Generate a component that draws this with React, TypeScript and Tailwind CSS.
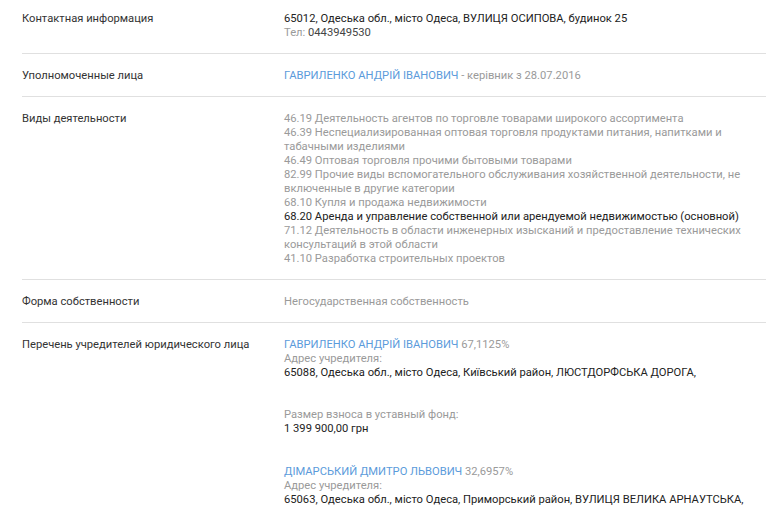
import React from 'react'

const gray = 'text-[#9a9a9a]'
const link = 'text-[#5b9bdb]'

function Row({ label, children, first }: { label: string; children: React.ReactNode; first?: boolean }) {
  return (
    <div className={`flex border-b border-[#e0e0e0] ${first ? 'pt-[12px]' : 'pt-[15px]'} pb-[13px]`}>
      <div className="w-[262px] shrink-0 text-[#333]">{label}</div>
      <div className="w-[482px]">{children}</div>
    </div>
  )
}

const activities: [string, boolean][] = [
  ['46.19 Деятельность агентов по торговле товарами широкого ассортимента', false],
  ['46.39 Неспециализированная оптовая торговля продуктами питания, напитками и табачными изделиями', false],
  ['46.49 Оптовая торговля прочими бытовыми товарами', false],
  ['82.99 Прочие виды вспомогательного обслуживания хозяйственной деятельности, не включенные в другие категории', false],
  ['68.10 Купля и продажа недвижимости', false],
  ['68.20 Аренда и управление собственной или арендуемой недвижимостью (основной)', true],
  ['71.12 Деятельность в области инженерных изысканий и предоставление технических консультаций в этой области', false],
  ['41.10 Разработка строительных проектов', false],
]

export default function App() {
  return (
    <div className="min-h-[531px] bg-white pl-[22px] text-[11.2px] leading-[14px] text-[#222] font-['Roboto','Liberation_Sans',sans-serif]">
      <div className="w-[744px]">
        <Row label="Контактная информация" first>
          <div>65012, Одеська обл., місто Одеса, ВУЛИЦЯ ОСИПОВА, будинок 25</div>
          <div className={gray}>
            Тел: <span className="text-[#444]">0443949530</span>
          </div>
        </Row>
        <Row label="Уполномоченные лица">
          <span className={link}>ГАВРИЛЕНКО АНДРІЙ ІВАНОВИЧ</span>
          <span className={gray}> - керівник з 28.07.2016</span>
        </Row>
        <Row label="Виды деятельности">
          {activities.map(([t, main]) => (
            <div key={t} className={main ? 'text-[#222]' : gray}>
              {t}
            </div>
          ))}
        </Row>
        <Row label="Форма собственности">
          <div className={gray}>Негосударственная собственность</div>
        </Row>
        <div className="flex pt-[15px]">
          <div className="w-[262px] shrink-0 text-[#333]">Перечень учредителей юридического лица</div>
          <div className="w-[482px]">
            <div>
              <span className={link}>ГАВРИЛЕНКО АНДРІЙ ІВАНОВИЧ</span> <span className={gray}>67,1125%</span>
            </div>
            <div className={gray}>Адрес учредителя:</div>
            <div>65088, Одеська обл., місто Одеса, Київський район, ЛЮСТДОРФСЬКА ДОРОГА,</div>
            <div className="h-[14px]" />
            <div className={`mt-[14px] ${gray}`}>Размер взноса в уставный фонд:</div>
            <div>1 399 900,00 грн</div>
            <div className="mt-[29px]">
              <span className={link}>ДІМАРСЬКИЙ ДМИТРО ЛЬВОВИЧ</span> <span className={gray}>32,6957%</span>
            </div>
            <div className={gray}>Адрес учредителя:</div>
            <div>65063, Одеська обл., місто Одеса, Приморський район, ВУЛИЦЯ ВЕЛИКА АРНАУТСЬКА,</div>
          </div>
        </div>
      </div>
    </div>
  )
}
